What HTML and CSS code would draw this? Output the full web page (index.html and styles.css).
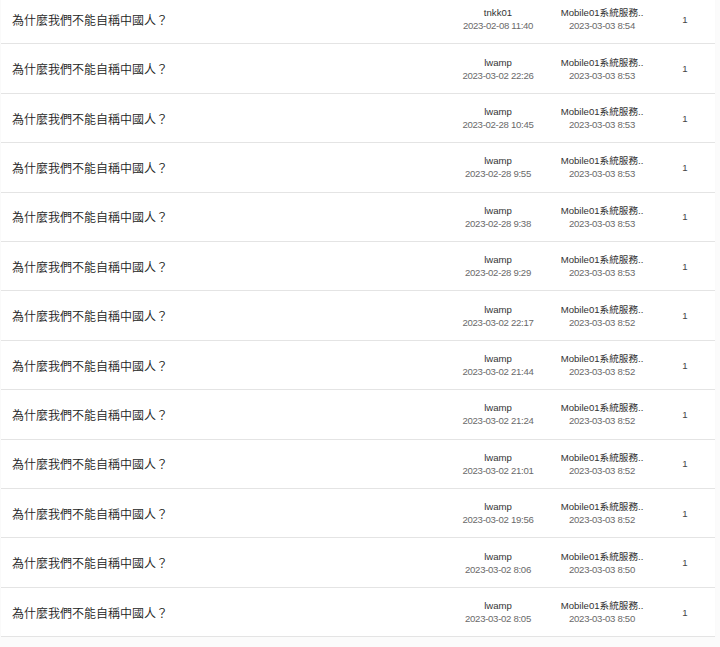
FILE: index.html
```html
<!DOCTYPE html>
<html lang="zh-Hant">
<head>
<meta charset="utf-8">
<title>列表</title>
<link rel="stylesheet" href="styles.css">
</head>
<body>
<div class="list">
  <div class="row"><div class="title">為什麼我們不能自稱中國人？</div><div class="cell"><span class="name">tnkk01</span><span class="date">2023-02-08 11:40</span></div><div class="cell"><span class="name">Mobile01系統服務..</span><span class="date">2023-03-03 8:54</span></div><div class="count">1</div></div>
  <div class="row"><div class="title">為什麼我們不能自稱中國人？</div><div class="cell"><span class="name">lwamp</span><span class="date">2023-03-02 22:26</span></div><div class="cell"><span class="name">Mobile01系統服務..</span><span class="date">2023-03-03 8:53</span></div><div class="count">1</div></div>
  <div class="row"><div class="title">為什麼我們不能自稱中國人？</div><div class="cell"><span class="name">lwamp</span><span class="date">2023-02-28 10:45</span></div><div class="cell"><span class="name">Mobile01系統服務..</span><span class="date">2023-03-03 8:53</span></div><div class="count">1</div></div>
  <div class="row"><div class="title">為什麼我們不能自稱中國人？</div><div class="cell"><span class="name">lwamp</span><span class="date">2023-02-28 9:55</span></div><div class="cell"><span class="name">Mobile01系統服務..</span><span class="date">2023-03-03 8:53</span></div><div class="count">1</div></div>
  <div class="row"><div class="title">為什麼我們不能自稱中國人？</div><div class="cell"><span class="name">lwamp</span><span class="date">2023-02-28 9:38</span></div><div class="cell"><span class="name">Mobile01系統服務..</span><span class="date">2023-03-03 8:53</span></div><div class="count">1</div></div>
  <div class="row"><div class="title">為什麼我們不能自稱中國人？</div><div class="cell"><span class="name">lwamp</span><span class="date">2023-02-28 9:29</span></div><div class="cell"><span class="name">Mobile01系統服務..</span><span class="date">2023-03-03 8:53</span></div><div class="count">1</div></div>
  <div class="row"><div class="title">為什麼我們不能自稱中國人？</div><div class="cell"><span class="name">lwamp</span><span class="date">2023-03-02 22:17</span></div><div class="cell"><span class="name">Mobile01系統服務..</span><span class="date">2023-03-03 8:52</span></div><div class="count">1</div></div>
  <div class="row"><div class="title">為什麼我們不能自稱中國人？</div><div class="cell"><span class="name">lwamp</span><span class="date">2023-03-02 21:44</span></div><div class="cell"><span class="name">Mobile01系統服務..</span><span class="date">2023-03-03 8:52</span></div><div class="count">1</div></div>
  <div class="row"><div class="title">為什麼我們不能自稱中國人？</div><div class="cell"><span class="name">lwamp</span><span class="date">2023-03-02 21:24</span></div><div class="cell"><span class="name">Mobile01系統服務..</span><span class="date">2023-03-03 8:52</span></div><div class="count">1</div></div>
  <div class="row"><div class="title">為什麼我們不能自稱中國人？</div><div class="cell"><span class="name">lwamp</span><span class="date">2023-03-02 21:01</span></div><div class="cell"><span class="name">Mobile01系統服務..</span><span class="date">2023-03-03 8:52</span></div><div class="count">1</div></div>
  <div class="row"><div class="title">為什麼我們不能自稱中國人？</div><div class="cell"><span class="name">lwamp</span><span class="date">2023-03-02 19:56</span></div><div class="cell"><span class="name">Mobile01系統服務..</span><span class="date">2023-03-03 8:52</span></div><div class="count">1</div></div>
  <div class="row"><div class="title">為什麼我們不能自稱中國人？</div><div class="cell"><span class="name">lwamp</span><span class="date">2023-03-02 8:06</span></div><div class="cell"><span class="name">Mobile01系統服務..</span><span class="date">2023-03-03 8:50</span></div><div class="count">1</div></div>
  <div class="row"><div class="title">為什麼我們不能自稱中國人？</div><div class="cell"><span class="name">lwamp</span><span class="date">2023-03-02 8:05</span></div><div class="cell"><span class="name">Mobile01系統服務..</span><span class="date">2023-03-03 8:50</span></div><div class="count">1</div></div>
</div>
</body>
</html>
```
FILE: styles.css
```css
html, body {
  margin: 0;
  padding: 0;
  background: #fbfbfb;
}
body {
  font-family: "Liberation Sans", "Noto Sans CJK TC", sans-serif;
  color: #333;
  overflow: hidden;
}
.list {
  margin: -5px 5px 0 1px;
  display: flex;
  flex-direction: column;
}
.row {
  display: grid;
  grid-template-columns: 1fr 102px 106px 60px;
  align-items: center;
  height: 48.42px;
  background: #fff;
  border-bottom: 1px solid #e4e4e4;
  box-shadow: 0 1px 1px rgba(0, 0, 0, 0.04);
}
.title {
  padding-left: 11px;
  font-family: "Noto Sans CJK TC", sans-serif;
  font-size: 12px;
  font-weight: 350;
  color: #222;
  white-space: nowrap;
}
.cell {
  display: flex;
  flex-direction: column;
  align-items: center;
  line-height: 13px;
  white-space: nowrap;
}
.name {
  font-size: 9.6px;
  color: #333;
}
.date {
  font-size: 9.6px;
  letter-spacing: -0.3px;
  color: #6a6a6a;
}
.count {
  text-align: center;
  font-size: 9.6px;
  color: #444;
}
```
